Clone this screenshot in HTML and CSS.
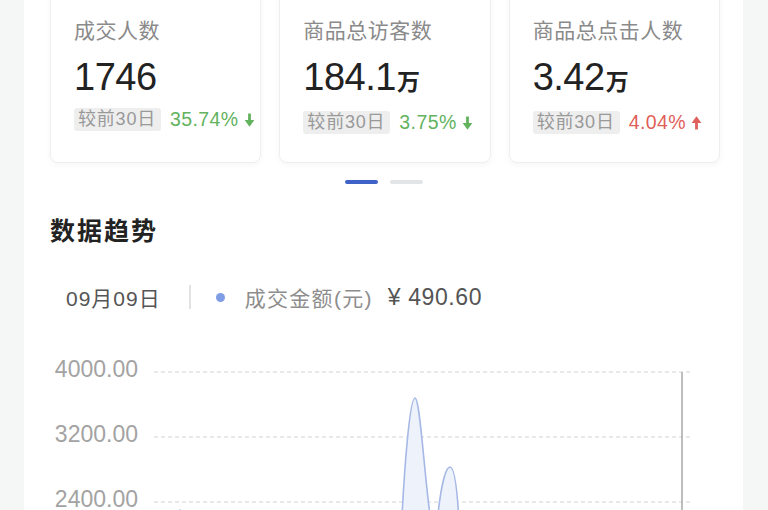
FILE: index.html
```html
<!DOCTYPE html>
<html lang="zh-CN">
<head>
<meta charset="utf-8">
<link rel="stylesheet" href="styles.css">
</head>
<body>
<div class="page">
  <div class="panel">
    <div class="cards">
      <div class="card">
        <div class="card-title">成交人数</div>
        <div class="card-value">1746</div>
        <div class="card-compare">
          <span class="tag">较前30日</span>
          <span class="pct down">35.74%</span>
          <svg class="arrow down" viewBox="0 0 10 13"><line x1="5" y1="0.5" x2="5" y2="8" /><polygon points="0.5,6.5 9.5,6.5 5,12.8" /></svg>
        </div>
      </div>
      <div class="card">
        <div class="card-title">商品总访客数</div>
        <div class="card-value">184.1<span class="unit">万</span></div>
        <div class="card-compare">
          <span class="tag">较前30日</span>
          <span class="pct down">3.75%</span>
          <svg class="arrow down" viewBox="0 0 10 13"><line x1="5" y1="0.5" x2="5" y2="8" /><polygon points="0.5,6.5 9.5,6.5 5,12.8" /></svg>
        </div>
      </div>
      <div class="card">
        <div class="card-title">商品总点击人数</div>
        <div class="card-value">3.42<span class="unit">万</span></div>
        <div class="card-compare">
          <span class="tag">较前30日</span>
          <span class="pct up">4.04%</span>
          <svg class="arrow up" viewBox="0 0 10 13"><line x1="5" y1="12.5" x2="5" y2="5" /><polygon points="0.5,6.5 9.5,6.5 5,0.2" /></svg>
        </div>
      </div>
    </div>
    <div class="pager"><span class="pager-bar active"></span><span class="pager-bar"></span></div>
    <h2 class="section-title">数据趋势</h2>
    <div class="legend-row">
      <span class="legend-date">09月09日</span>
      <span class="legend-sep"></span>
      <span class="legend-dot"></span>
      <span class="legend-label">成交金额(元)</span>
      <span class="legend-value">¥ 490.60</span>
    </div>
    <svg class="chart" viewBox="0 0 719 200" width="719" height="200">
      <g class="grid">
        <line x1="130" y1="29" x2="666" y2="29" />
        <line x1="130" y1="94" x2="666" y2="94" />
        <line x1="130" y1="159" x2="666" y2="159" />
      </g>
      <text class="axis-label" x="114" y="34">4000.00</text>
      <text class="axis-label" x="114" y="99">3200.00</text>
      <text class="axis-label" x="114" y="164">2400.00</text>
      <path class="area" d="M 150 215 C 152 178, 154 167, 156 167 C 158 167, 160 178, 162 215 Z" />
      <path class="area" d="M 376 215 C 380 120, 386 55, 391 55 C 396 55, 400 130, 407 180 C 409 196, 411 196, 413 180 C 417 140, 422 124, 426 124 C 430 124, 433 140, 435 180 L 437 215 Z" />
      <line class="cursor" x1="658" y1="29" x2="658" y2="200" />
    </svg>
  </div>
</div>
</body>
</html>
```

FILE: styles.css
```css
* { box-sizing: border-box; }
html, body { margin: 0; padding: 0; }
body {
  background: #f5f6f6;
  font-family: "Liberation Sans", "Noto Sans CJK SC", sans-serif;
  width: 768px;
  height: 510px;
  overflow: hidden;
}
.page {
  display: flex;
  padding-left: 24px;
}
.panel {
  width: 719px;
  height: 510px;
  background: #fff;
  padding: 0 23px 0 26px;
  overflow: hidden;
}
.cards {
  display: flex;
  gap: 18px;
  margin-top: -10px;
}
.card {
  flex: 1;
  background: #fff;
  border: 1px solid #efefef;
  border-radius: 8px;
  box-shadow: 0 2px 6px rgba(0,0,0,0.04);
  padding: 24px 0 28px 23px;
}
.card-title {
  font-family: "Noto Sans CJK SC", sans-serif;
  font-size: 21px;
  line-height: 29px;
  color: #8a8a8a;
  letter-spacing: 0.5px;
}
.card-value {
  margin-top: 10px;
  font-size: 38px;
  line-height: 46px;
  color: #222;
  letter-spacing: -0.5px;
}
.unit {
  font-family: "Noto Sans CJK SC", sans-serif;
  font-size: 23px;
  font-weight: 700;
  margin-left: 1px;
  letter-spacing: 0;
}
.card-compare {
  margin-top: 8px;
  display: flex;
  align-items: center;
  height: 23px;
}
.tag {
  background: #eeeeee;
  color: #999;
  font-size: 18px;
  line-height: 23px;
  padding: 0 5px 0 4px;
  border-radius: 3px;
  letter-spacing: 0.8px;
}
.pct {
  margin-left: 9px;
  font-size: 19.5px;
  line-height: 23px;
  letter-spacing: 0.4px;
}
.pct.down { color: #62b25e; }
.pct.up { color: #df5f5a; }
.arrow {
  width: 11px;
  height: 14px;
  margin-left: 5px;
}
.arrow line { stroke-width: 2.6; }
.arrow.down line { stroke: #62b25e; }
.arrow.down polygon { fill: #62b25e; }
.arrow.up line { stroke: #df5f5a; }
.arrow.up polygon { fill: #df5f5a; }
.pager {
  display: flex;
  justify-content: center;
  gap: 12px;
  margin-top: 17px;
  padding-right: 3px;
}
.pager-bar {
  width: 33px;
  height: 4px;
  border-radius: 2px;
  background: #e3e4e6;
}
.pager-bar.active { background: #3f62c8; }
.section-title {
  margin: 27px 0 0 0;
  font-family: "Noto Sans CJK SC", sans-serif;
  font-size: 25px;
  line-height: 36px;
  font-weight: 700;
  color: #222;
  letter-spacing: 2px;
}
.legend-row {
  display: flex;
  align-items: center;
  margin-top: 32px;
  height: 36px;
  padding-left: 16px;
}
.legend-date {
  font-size: 21px;
  color: #555;
  letter-spacing: 1px;
}
.legend-sep {
  width: 2px;
  height: 24px;
  background: #e2e2e2;
  margin-left: 28px;
}
.legend-dot {
  width: 9px;
  height: 9px;
  border-radius: 50%;
  background: #7e9de4;
  margin-left: 25px;
}
.legend-label {
  margin-left: 20px;
  font-size: 21px;
  color: #8d8d8d;
  letter-spacing: 1.3px;
}
.legend-value {
  margin-left: 15px;
  font-size: 23px;
  color: #555;
  letter-spacing: 0.6px;
}
.chart {
  display: block;
  margin: 28px 0 0 -26px;
}
.grid line {
  stroke: #d4d4d4;
  stroke-width: 1.2;
  stroke-dasharray: 4 3;
}
.axis-label {
  font-family: "Liberation Sans", sans-serif;
  font-size: 23px;
  fill: #a3a3a3;
  text-anchor: end;
}
.area {
  fill: #eef2fb;
  stroke: #a6b8e6;
  stroke-width: 1.6;
}
.cursor {
  stroke: #a8a8a8;
  stroke-width: 1.5;
}
```
